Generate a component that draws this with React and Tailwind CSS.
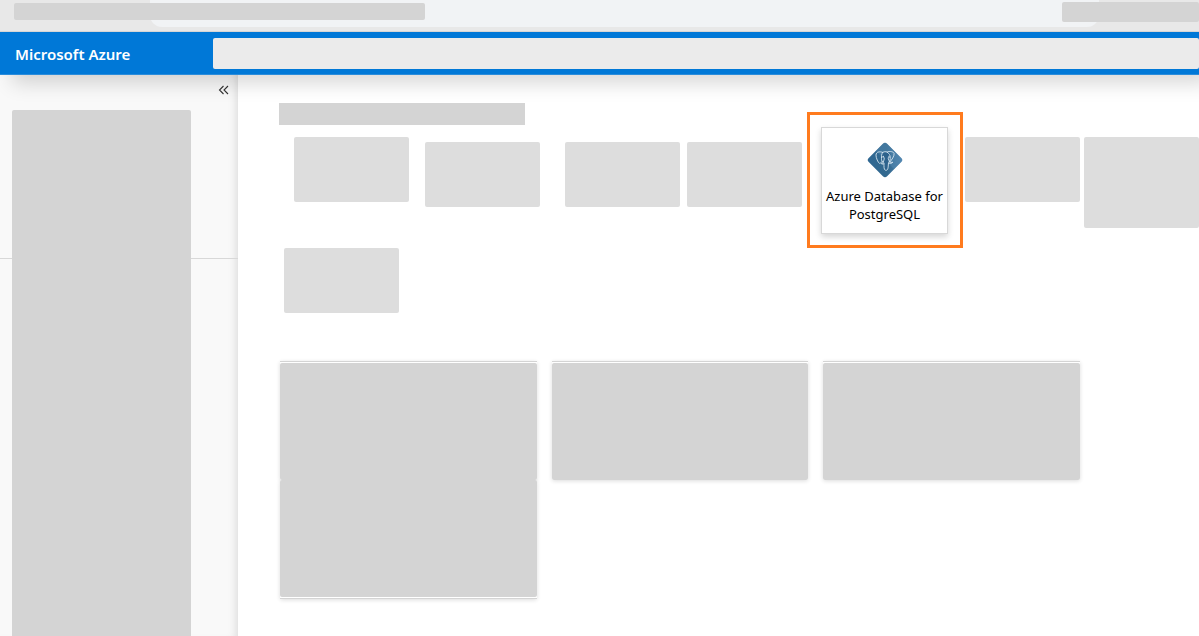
function Placeholder({ className = "" }) {
  return <div aria-hidden="true" className={`shrink-0 rounded-[2px] ${className}`} />;
}

function PostgresIcon() {
  return (
    <svg width="36" height="36" viewBox="0 0 36 36" aria-hidden="true">
      <defs>
        <linearGradient id="diamond" x1="0" y1="0" x2="1" y2="0">
          <stop offset="0" stopColor="#2f6792" />
          <stop offset="0.55" stopColor="#33698f" />
          <stop offset="1" stopColor="#4a80ab" />
        </linearGradient>
        <clipPath id="shape">
          <rect x="5" y="5" width="26" height="26" rx="3" transform="rotate(45 18 18)" />
        </clipPath>
      </defs>
      <g clipPath="url(#shape)">
        <rect width="36" height="36" fill="url(#diamond)" />
        <path d="M18 0L36 18L27 27L9 9Z" fill="#6a9cc4" opacity="0.3" />
      </g>
      <path
        d="M16.8 20.5C17.1 24 16.7 27.6 18.5 28.2C21.1 28.8 21.3 26 21.3 23L21.7 20.5C23.5 17 24.5 13 22.9 11.2C21.1 9.4 16.9 9.2 15.1 11.6C14.1 14 14.5 18 16.8 20.5Z"
        fill="#2d628c"
      />
      <g transform="translate(-0.5 0)" fill="none" stroke="#d5e4ef" strokeWidth="0.9" strokeLinecap="round" strokeLinejoin="round">
        <path d="M16.2 10.4C13.4 9.2 9.6 9.6 9.5 13.2C9.5 16 11.6 20.6 13 21.4C13.8 21.8 14.6 20.6 15.4 19.6" />
        <path d="M16.2 10.4C14.8 12.2 14.9 14.6 15 16.4C14.8 18.4 15.8 19.8 16.6 20.4C17 21.2 15.6 21.4 14.8 21.6C15.6 22.4 16.8 22.2 17.5 21.6" />
        <path d="M17.5 21.6C17.5 24 17.2 27.6 18.8 28.2C21.4 28.9 21.7 26 21.8 23L22 21" />
        <path d="M16.2 10.4C17.6 9.5 19.2 9.5 20.6 10.1C23 8.8 27.4 9.6 27.6 11.6C27.8 14.4 25.4 17.6 23.4 20" />
        <path d="M20.6 10.1C23 11.6 24 13.6 23.6 15.4C23.9 17.4 23.4 18.8 22.9 19.8C23.8 20.6 25.2 20.4 26.4 20.2C25 21.6 23.4 22 22 21" />
        <path d="M15.1 15.2C16.8 14.2 18 15.2 17.7 17C17.5 18.6 16.8 19.2 16.6 20.4M23.6 15.2C22.4 14.6 21.4 15.2 21.8 16.8C22.2 18 22.7 18.8 22.9 19.8" />
      </g>
      <circle cx="16.5" cy="14.3" r="0.6" fill="#d5e4ef" />
      <circle cx="21.9" cy="14.2" r="0.5" fill="#d5e4ef" />
    </svg>
  );
}

function BrowserBar() {
  return (
    <div className="relative z-20 h-8 overflow-hidden border-b border-[#d6d6d6] bg-[#e8e8e8]">
      <div className="mr-[100px] ml-[150px] h-[27px] rounded-b-xl bg-[#f1f3f5]" />
      <Placeholder className="absolute top-[3px] left-[14px] h-[17px] w-[411px] bg-[#d4d4d4]" />
      <Placeholder className="absolute top-[2px] right-0 h-5 w-[137px] bg-[#d4d4d4]" />
    </div>
  );
}

function Header() {
  return (
    <header className="relative z-10 flex h-[43px] items-center border-b border-[#2a8cdb] bg-[#0078d7] shadow-[12px_8px_20px_rgba(0,0,0,0.16)]">
      <a href="#" className="w-[213px] shrink-0 pt-[2px] pl-[15px] text-[15px] font-semibold text-white">
        Microsoft Azure
      </a>
      <input
        type="search"
        aria-label="Search"
        className="h-[31px] min-w-0 flex-1 rounded-[2px] bg-[#ebebeb] px-3 text-sm outline-none"
      />
    </header>
  );
}

function Sidebar() {
  return (
    <aside className="relative flex w-[238px] shrink-0 flex-col bg-[#f9f9f9] shadow-[inset_-8px_0_8px_-6px_rgba(0,0,0,0.12)]">
      <hr className="absolute top-[183px] w-full border-t border-[#d8d8d8]" />
      <div className="flex h-[35px] justify-end pr-2">
        <button type="button" aria-label="Collapse menu" className="mt-[9px] flex size-3">
          <svg width="12" height="12" viewBox="0 0 12 12" fill="none" stroke="#333" strokeWidth="1.1" aria-hidden="true">
            <path d="M5.5 2L1.5 6L5.5 10M10 2L6 6L10 10" />
          </svg>
        </button>
      </div>
      <Placeholder className="relative ml-3 w-[179px] flex-1 rounded-b-none bg-[#d4d4d4]" />
    </aside>
  );
}

function ServiceTile() {
  return (
    <div className="ml-[5px] h-[136px] w-[156px] shrink-0 border-3 border-[#ff7b1e] pt-3 pl-[11px]">
      <a
        href="#"
        className="flex h-[107px] w-[127px] flex-col items-center border border-[#d8d8d8] bg-white pt-[14px] text-center text-[13px] leading-[18px] text-black shadow-[0_3px_6px_rgba(0,0,0,0.16)]"
      >
        <PostgresIcon />
        <span className="mt-[9px] whitespace-nowrap">
          Azure Database for
          <br />
          PostgreSQL
        </span>
      </a>
    </div>
  );
}

function Card({ top = true, bottom = false }) {
  return (
    <div className="flex h-[119px] flex-col rounded-[2px] shadow-[0_1px_4px_rgba(0,0,0,0.14)]">
      {top && <div className="h-[2px] shrink-0 border-t border-[#d4d4d4] bg-white" />}
      <Placeholder className="relative flex-1 bg-[#d4d4d4]" />
      {bottom && <div className="h-[2px] shrink-0 border-b border-[#d4d4d4] bg-white" />}
    </div>
  );
}

export default function App() {
  return (
    <div className="flex min-h-screen flex-col overflow-hidden bg-white font-['Noto_Sans','Open_Sans',sans-serif]">
      <BrowserBar />
      <Header />
      <div className="flex flex-1">
        <Sidebar />
        <main className="min-w-0 flex-1 overflow-hidden pt-7">
          <Placeholder className="ml-[41px] h-[22px] w-[246px] rounded-none bg-[#d4d4d4]" />
          <div className="-mt-[13px] flex items-start pl-14">
            <Placeholder className="mt-[25px] h-[65px] w-[115px] bg-[#dddddd]" />
            <Placeholder className="mt-[30px] ml-4 h-[65px] w-[115px] bg-[#dddddd]" />
            <Placeholder className="mt-[30px] ml-[25px] h-[65px] w-[115px] bg-[#dddddd]" />
            <Placeholder className="mt-[30px] ml-[7px] h-[65px] w-[115px] bg-[#dddddd]" />
            <ServiceTile />
            <Placeholder className="mt-[25px] ml-[2px] h-[65px] w-[115px] bg-[#dddddd]" />
            <Placeholder className="mt-[25px] ml-1 h-[91px] w-[115px] bg-[#dddddd]" />
          </div>
          <Placeholder className="ml-[46px] h-[65px] w-[115px] bg-[#dddddd]" />
          <section className="mt-12 mr-[119px] ml-[42px] grid max-w-[800px] grid-cols-3 gap-x-[15px]">
            <Card />
            <Card />
            <Card />
            <Card top={false} bottom />
          </section>
        </main>
      </div>
    </div>
  );
}
